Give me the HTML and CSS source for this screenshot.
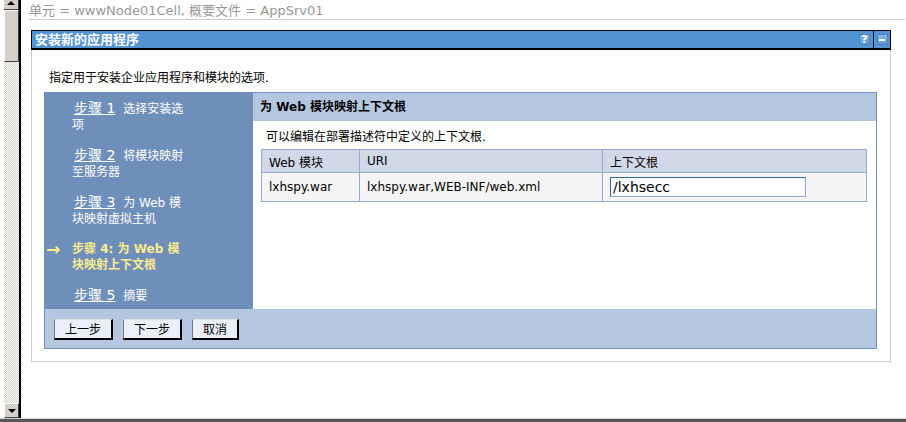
FILE: index.html
```html
<!DOCTYPE html>
<html lang="zh-CN">
<head>
<meta charset="utf-8">
<title>安装新的应用程序</title>
<link rel="stylesheet" href="styles.css">
</head>
<body>
<div class="window">
  <div class="top">
    <div class="vscroll">
      <div class="sb-up"><span class="tri-up"></span></div>
      <div class="sb-thumb"></div>
      <div class="sb-track"></div>
      <div class="sb-down"><span class="tri-down"></span></div>
    </div>
    <div class="vline"></div>
    <div class="main">
      <div class="crumb">单元 = wwwNode01Cell, 概要文件 = AppSrv01</div>
      <div class="titlebar">
        <div class="title">安装新的应用程序<span class="tb-icon help">?</span></div>
        <div class="tb-min"><span class="tb-icon minus"><span class="dash"></span></span></div>
      </div>
      <div class="box">
        <p class="intro">指定用于安装企业应用程序和模块的选项.</p>
        <div class="wizard">
          <div class="wz-top">
            <div class="steps">
              <div class="step"><span class="arrow"></span><div class="st-text"><a class="st-link" href="#">步骤 1</a>&nbsp;选择安装选项</div></div>
              <div class="step"><span class="arrow"></span><div class="st-text"><a class="st-link" href="#">步骤 2</a>&nbsp;将模块映射至服务器</div></div>
              <div class="step"><span class="arrow"></span><div class="st-text"><a class="st-link" href="#">步骤 3</a>&nbsp;为 Web 模块映射虚拟主机</div></div>
              <div class="step current"><span class="arrow">→</span><div class="st-text">步骤 4: 为 Web 模块映射上下文根</div></div>
              <div class="step"><span class="arrow"></span><div class="st-text"><a class="st-link" href="#">步骤 5</a>&nbsp;摘要</div></div>
            </div>
            <div class="pane">
              <div class="pane-head">为 Web 模块映射上下文根</div>
              <div class="pane-body">
                <p class="pane-desc">可以编辑在部署描述符中定义的上下文根.</p>
                <table class="grid">
                  <thead>
                    <tr><th class="c1">Web 模块</th><th class="c2">URI</th><th class="c3">上下文根</th></tr>
                  </thead>
                  <tbody>
                    <tr><td>lxhspy.war</td><td>lxhspy.war,WEB-INF/web.xml</td><td><input class="ctx" type="text" value="/lxhsecc"></td></tr>
                  </tbody>
                </table>
              </div>
            </div>
          </div>
          <div class="buttons">
            <button class="btn" type="button">上一步</button>
            <button class="btn" type="button">下一步</button>
            <button class="btn" type="button">取消</button>
          </div>
        </div>
      </div>
    </div>
  </div>
  <div class="bottom"></div>
</div>
</body>
</html>
```
FILE: styles.css
```css
* { box-sizing: border-box; }
html, body { margin: 0; padding: 0; }
body {
  width: 906px;
  height: 422px;
  overflow: hidden;
  background: #fff;
  font-family: "DejaVu Sans", "Noto Sans CJK SC", sans-serif;
  font-size: 12px;
  color: #000;
}
.window { display: flex; flex-direction: column; height: 422px; }
.top { display: flex; height: 418px; padding-left: 4px; }
.vscroll { width: 15px; display: flex; flex-direction: column; }
.sb-up {
  height: 10px; background: #d4d0c8; border-bottom: 1px solid #404040;
  border-right: 1px solid #404040; display: flex; justify-content: center; align-items: flex-start; padding-top: 1px;
}
.tri-up { width: 0; height: 0; border-left: 4px solid transparent; border-right: 4px solid transparent; border-bottom: 4px solid #000; }
.sb-thumb {
  height: 52px; background: #d4d0c8;
  border-top: 1px solid #fff; border-left: 1px solid #fff;
  border-right: 1px solid #404040; border-bottom: 1px solid #404040;
}
.sb-track {
  flex: 1;
  background: repeating-conic-gradient(#d4d0c8 0 25%, #ffffff 0 50%) 0 0 / 2px 2px;
}
.sb-down {
  height: 15px; background: #d4d0c8;
  border-top: 1px solid #fff; border-left: 1px solid #fff;
  border-right: 1px solid #404040; border-bottom: 1px solid #404040;
  display: flex; justify-content: center; align-items: center;
}
.tri-down { width: 0; height: 0; border-left: 4px solid transparent; border-right: 4px solid transparent; border-top: 4px solid #000; }
.vline { width: 2px; background: #000; }
.main { flex: 1; display: flex; flex-direction: column; }
.crumb {
  margin-left: 8px; margin-right: 1px;
  padding-top: 3px; height: 20px; line-height: 16px;
  font-size: 13px; color: #999;
  border-bottom: 1px solid #ccc;
}
.titlebar {
  margin: 10px 15px 0 10px;
  height: 20px;
  display: flex;
  border: 1px solid #000;
  border-bottom-width: 2px;
  background: #5394d4;
}
.title {
  flex: 1; display: flex; align-items: center;
  padding: 0 3px 0 3px;
  color: #fff; font-weight: bold; font-size: 13px; line-height: 17px;
  border-right: 1px solid #000;
}
.tb-icon {
  width: 11px; height: 11px;
  background: linear-gradient(#8ab6e6, #5f97d2);
  border: 1px solid #4a82be;
  display: flex; align-items: center; justify-content: center;
  color: #fff; font-size: 11px; font-weight: bold; line-height: 10px;
}
.help { margin-left: auto; }
.tb-min { width: 16px; display: flex; align-items: center; justify-content: center; }
.dash { width: 6px; height: 2px; background: #fff; }
.box {
  margin: 0 15px 0 10px;
  border: 1px solid #ccc; border-top: 0;
  padding: 20px 13px 12px 12px;
  height: 312px;
}
.intro { margin: 0 0 6px 5px; line-height: 16px; font-size: 12px; }
.wizard { border: 1px solid #6f8fbb; }
.wz-top { display: flex; height: 216px; }
.steps {
  width: 208px; background: #6f8fbb;
  padding: 7px 0 0 1px;
  display: flex; flex-direction: column; gap: 14px;
}
.step { display: flex; color: #fff; line-height: 16px; font-size: 12px; }
.arrow { width: 26px; flex: none; color: #fceb8a; font-weight: bold; font-size: 17px; line-height: 16px; }
.st-text { width: 118px; min-height: 32px; }
.st-link { color: #fff; text-decoration: underline; font-size: 14px; line-height: 16px; margin-left: 2px; margin-right: 4px; }
.current .st-text { color: #fceb8a; font-weight: bold; }
.pane { flex: 1; background: #fff; display: flex; flex-direction: column; }
.pane-head {
  height: 28px; background: #b5c7e0;
  padding-left: 7px; line-height: 28px;
  font-weight: bold; font-size: 12px;
}
.pane-body { padding: 8px 9px 0 8px; }
.pane-desc { margin: 0 0 4px 5px; line-height: 16px; }
.grid { width: 100%; border-collapse: collapse; font-size: 12px; }
.grid th, .grid td { border: 1px solid #93aad8; text-align: left; padding: 0 7px; }
.grid th { background: #d1d9e8; font-weight: normal; height: 23px; }
.grid td { background: #f5f5f5; height: 29px; }
.c1 { width: 98px; }
.c2 { width: 243px; }
.ctx {
  width: 196px; height: 20px;
  border: 1px solid #8ea6d4; border-top-color: #34679f; border-left-color: #34679f;
  padding: 0 2px; margin: 0;
  font-family: "DejaVu Sans", sans-serif; font-size: 14px;
  background: #fff; display: block;
}
.buttons {
  height: 39px; background: #b5c7e0;
  padding: 10px 9px 0 9px;
  display: flex; gap: 10px; align-items: flex-start;
}
.btn {
  height: 21px; padding: 0 10px;
  background: #eaf0fb;
  border: 1px solid #000; border-top-color: #e0e0e0; border-left-color: #777;
  border-right-width: 2px; border-bottom-width: 2px;
  font-family: "Noto Sans CJK SC", sans-serif; font-size: 12px; line-height: 16px;
  color: #000;
}
.bottom { height: 4px; border-top: 1px solid #d4d0c8; background: #555; }
```
